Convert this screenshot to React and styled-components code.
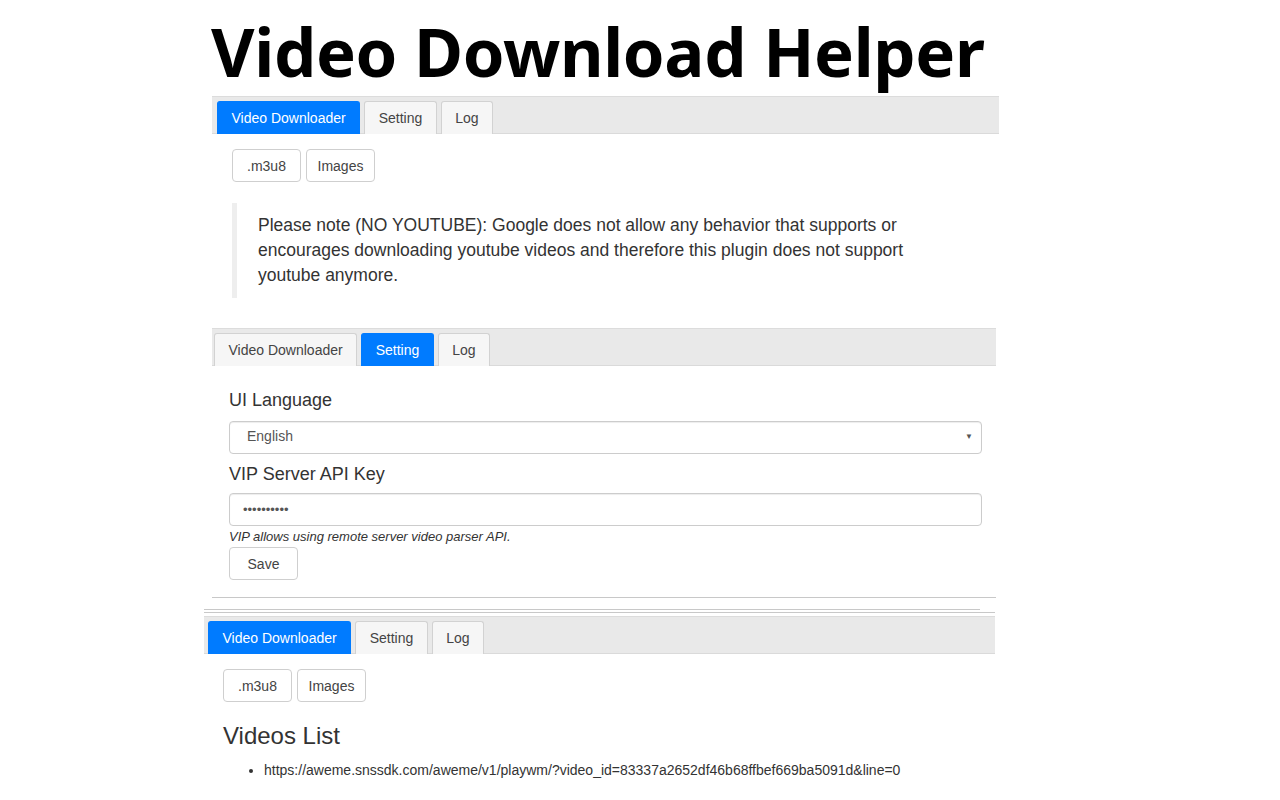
import styled, { createGlobalStyle } from "styled-components";

const GlobalStyle = createGlobalStyle`
  * {
    box-sizing: border-box;
  }

  body {
    margin: 0;
    background: #fff;
    color: #333;
    font-family: "Liberation Sans", Arial, sans-serif;
    font-size: 14px;
    line-height: 1.42857;
  }
`;

const Page = styled.div`
  width: 1280px;
  height: 800px;
  overflow: hidden;
`;

const Title = styled.h1`
  margin: 18px 0 11px 211px;
  font-family: "Noto Sans", sans-serif;
  font-size: 67px;
  line-height: 67px;
  font-weight: 700;
  letter-spacing: -0.35px;
  color: #000;
`;

const Shot = styled.section`
  margin-left: ${(p) => p.$left}px;
  width: ${(p) => p.$width}px;
`;

const TabBar = styled.nav`
  display: flex;
  align-items: flex-end;
  gap: 4px;
  padding: 4px 0 0 ${(p) => p.$inset}px;
  background: #e9e9e9;
  border-top: 1px solid #dcdcdc;
  border-bottom: 1px solid #dadada;
`;

const Tab = styled.a`
  display: block;
  height: 33px;
  margin-bottom: -1px;
  padding: 0 13.5px;
  line-height: 32px;
  font-size: 14px;
  text-decoration: none;
  border: 1px solid ${(p) => (p.$active ? "#007bff" : "#d2d2d2")};
  border-bottom: none;
  border-radius: 3px 3px 0 0;
  background: ${(p) => (p.$active ? "#007bff" : "#f6f6f6")};
  color: ${(p) => (p.$active ? "#fff" : "#444")};
`;

const Body = styled.div`
  padding: ${(p) => p.$pad};
`;

const ButtonRow = styled.div`
  display: flex;
  gap: 5px;
`;

const Button = styled.button`
  width: 69px;
  height: 33px;
  padding: 0;
  font-family: "Liberation Sans", Arial, sans-serif;
  font-size: 14px;
  color: #444;
  background: #fff;
  border: 1px solid #cfcfcf;
  border-radius: 4px;
`;

const Note = styled.blockquote`
  margin: 21px 0 0;
  padding: 10px 20px 10px 21px;
  border-left: 5px solid #eee;
  font-size: 17.5px;
  line-height: 25px;
  color: #333;
`;

const Label = styled.label`
  display: block;
  margin-top: ${(p) => p.$top}px;
  font-size: 18px;
  line-height: 25.7px;
  color: #333;
`;

const Field = styled.div`
  display: flex;
  align-items: center;
  justify-content: space-between;
  height: 33px;
  margin-top: ${(p) => p.$top}px;
  padding: 0 8px 0 ${(p) => p.$indent}px;
  font-size: ${(p) => p.$size}px;
  color: #555;
  border: 1px solid #ccc;
  border-radius: 4px;
  box-shadow: inset 0 1px 1px rgba(0, 0, 0, 0.075);
`;

const Caret = styled.span`
  font-size: 8px;
  color: #555;
`;

const Help = styled.p`
  margin: 2px 0 0;
  font-size: 13px;
  line-height: 18.6px;
  font-style: italic;
  color: #333;
`;

const Rule = styled.hr`
  margin: ${(p) => p.$top}px 0 0 ${(p) => p.$left || 0}px;
  width: ${(p) => p.$width}px;
  height: 0;
  border: none;
  border-top: 1px solid #c8c8c8;
`;

const Heading = styled.h3`
  margin: 21px 0 0;
  font-size: 24px;
  font-weight: 400;
  line-height: 26.4px;
  color: #333;
`;

const List = styled.ul`
  margin: 12px 0 0;
  padding-left: 41px;
  font-size: 14px;
  line-height: 18.6px;
  color: #333;
`;

const Spacer = styled.div`
  height: ${(p) => p.$h}px;
`;

const tabs = ["Video Downloader", "Setting", "Log"];

function Tabs({ active, inset }) {
  return (
    <TabBar $inset={inset}>
      {tabs.map((t) => (
        <Tab key={t} href="#" $active={t === active}>
          {t}
        </Tab>
      ))}
    </TabBar>
  );
}

function SourceButtons() {
  return (
    <ButtonRow>
      <Button>.m3u8</Button>
      <Button>Images</Button>
    </ButtonRow>
  );
}

export default function App() {
  return (
    <Page>
      <GlobalStyle />
      <Title>Video Download Helper</Title>

      <Shot $left={212} $width={787}>
        <Tabs active="Video Downloader" inset={5} />
        <Body $pad="15px 19px 0 20px">
          <SourceButtons />
          <Note>
            Please note (NO YOUTUBE): Google does not allow any behavior that
            supports or encourages downloading youtube videos and therefore
            this plugin does not support youtube anymore.
          </Note>
        </Body>
      </Shot>

      <Spacer $h={30} />

      <Shot $left={212} $width={784}>
        <Tabs active="Setting" inset={2} />
        <Body $pad="0 14px 0 17px">
          <Label $top={22}>UI Language</Label>
          <Field $top={7} $indent={17} $size={14}>
            <span>English</span>
            <Caret>▼</Caret>
          </Field>
          <Label $top={8}>VIP Server API Key</Label>
          <Field $top={6} $indent={13} $size={13}>
            <span>••••••••••</span>
          </Field>
          <Help>VIP allows using remote server video parser API.</Help>
          <Button>Save</Button>
        </Body>
        <Rule $top={17} $width={784} />
      </Shot>

      <Shot $left={204} $width={791}>
        <Rule $top={11} $width={776} />
        <Rule $top={2} $width={791} />
        <Spacer $h={3} />
        <Tabs active="Video Downloader" inset={4} />
        <Body $pad="15px 0 0 19px">
          <SourceButtons />
          <Heading>Videos List</Heading>
          <List>
            <li>
              https://aweme.snssdk.com/aweme/v1/playwm/?video_id=83337a2652df46b68ffbef669ba5091d&amp;line=0
            </li>
          </List>
        </Body>
      </Shot>
    </Page>
  );
}
